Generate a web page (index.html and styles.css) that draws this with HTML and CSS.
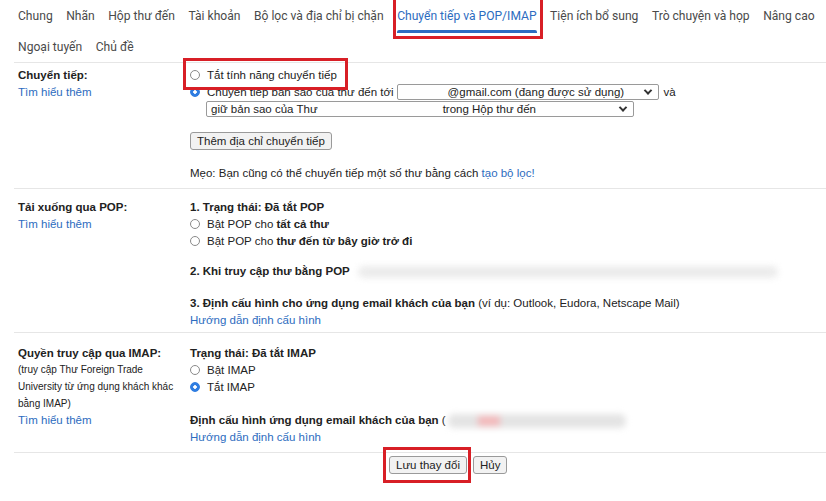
FILE: index.html
```html
<!DOCTYPE html>
<html lang="vi">
<head>
    <meta charset="UTF-8">
    <title>Cài đặt - Chuyển tiếp và POP/IMAP</title>
    <link rel="stylesheet" href="styles.css">
</head>
<body>
    <div class="page">
        <!-- Tabs -->
        <nav class="tabs">
            <div class="tab-row">
                <a class="tab">Chung</a>
                <a class="tab">Nhãn</a>
                <a class="tab">Hộp thư đến</a>
                <a class="tab">Tài khoản</a>
                <a class="tab">Bộ lọc và địa chỉ bị chặn</a>
                <a class="tab active mark">Chuyển tiếp và POP/IMAP</a>
                <a class="tab">Tiện ích bổ sung</a>
                <a class="tab">Trò chuyện và họp</a>
                <a class="tab">Nâng cao</a>
            </div>
            <div class="tab-row">
                <a class="tab">Ngoại tuyến</a>
                <a class="tab">Chủ đề</a>
            </div>
        </nav>

        <!-- Forwarding -->
        <section class="setting first">
            <div class="label">
                <b>Chuyển tiếp:</b>
                <a class="link">Tìm hiểu thêm</a>
            </div>
            <div class="value">
                <div class="line"><span class="mark mark-radio"><span class="radio"></span>Tắt tính năng chuyển tiếp</span></div>
                <div class="line"><span class="radio checked"></span>Chuyển tiếp bản sao của thư đến tới<span class="select select-email"><span class="sel-text">@gmail.com (đang được sử dụng)</span><span class="chev"></span></span>và</div>
                <div class="line indent">
                    <span class="select select-keep"><span>giữ bản sao của Thư</span><span class="sel-text keep">trong Hộp thư đến</span><span class="chev"></span></span>
                </div>
                <div class="line spaced"><button class="btn">Thêm địa chỉ chuyển tiếp</button></div>
                <div class="line tip">Mẹo: Bạn cũng có thể chuyển tiếp một số thư bằng cách <a class="link">tạo bộ lọc!</a></div>
            </div>
        </section>

        <!-- POP -->
        <section class="setting pop">
            <div class="label">
                <b>Tải xuống qua POP:</b>
                <a class="link">Tìm hiểu thêm</a>
            </div>
            <div class="value">
                <div class="line"><b>1. Trạng thái: Đã tắt POP</b></div>
                <div class="line"><span class="radio"></span>Bật POP cho <b>tất cả thư</b></div>
                <div class="line"><span class="radio"></span>Bật POP cho <b>thư đến từ bây giờ trở đi</b></div>
                <div class="line gap"><b>2. Khi truy cập thư bằng POP</b><span class="blur blur-pop"></span></div>
                <div class="line gap-md"><b>3. Định cấu hình cho ứng dụng email khách của bạn</b> (ví dụ: Outlook, Eudora, Netscape Mail)</div>
                <div class="line"><a class="link">Hướng dẫn định cấu hình</a></div>
            </div>
        </section>

        <!-- IMAP -->
        <section class="setting imap">
            <div class="label">
                <b>Quyền truy cập qua IMAP:</b>
                <span class="small">(truy cập Thư Foreign Trade University từ ứng dụng khách khác bằng IMAP)</span>
                <a class="link">Tìm hiểu thêm</a>
            </div>
            <div class="value">
                <div class="line"><b>Trạng thái: Đã tắt IMAP</b></div>
                <div class="line"><span class="radio"></span>Bật IMAP</div>
                <div class="line"><span class="radio checked"></span>Tắt IMAP</div>
                <div class="line gap-lg"><b>Định cấu hình ứng dụng email khách của bạn</b> (<span class="blur blur-imap"><span class="blur-red"></span></span></div>
                <div class="line"><a class="link">Hướng dẫn định cấu hình</a></div>
            </div>
        </section>

        <!-- Actions -->
        <div class="actions">
            <span class="mark mark-save"><button class="btn">Lưu thay đổi</button></span>
            <button class="btn">Hủy</button>
        </div>
    </div>
</body>
</html>
```

FILE: styles.css
```css
/* General */
body {
    margin: 0;
    background: #fff;
    color: #222;
    font-family: "Liberation Sans", Arial, sans-serif;
    font-size: 11.5px;
}

.page {
    width: 826px;
    height: 501px;
    overflow: hidden;
}

.link {
    color: #2d6cc0;
    cursor: pointer;
}

/* Tabs */
.tabs {
    padding: 0 0 0 18px;
    font-family: Roboto, "Open Sans", Arial, sans-serif;
    font-size: 12.1px;
    color: #4a4a4a;
}

.tab-row {
    display: flex;
    gap: 13.5px;
    height: 32px;
    align-items: center;
}

.tab-row + .tab-row {
    height: 30px;
}

.tab {
    position: relative;
    white-space: nowrap;
}

.tab.active {
    color: #2d6cc0;
}

.tab.active::after {
    content: "";
    position: absolute;
    left: 0;
    right: 0;
    bottom: -10px;
    height: 3px;
    background: #2d6cc0;
    border-radius: 2px 2px 0 0;
}

/* Red highlight boxes */
.mark {
    position: relative;
}

.mark::before {
    content: "";
    position: absolute;
    border: 3px solid #d81f26;
    pointer-events: none;
}

.tab.mark::before {
    left: -4px;
    right: -6px;
    top: -14px;
    bottom: -16px;
}

.mark-radio {
    display: inline-block;
}

.mark-radio::before {
    left: -7px;
    right: -11px;
    top: -9px;
    bottom: -6px;
}

.mark-save {
    display: inline-block;
}

.mark-save::before {
    left: -6px;
    right: -4px;
    top: -9px;
    bottom: -9px;
}

/* Setting sections */
.setting {
    display: grid;
    grid-template-columns: 172px 1fr;
    margin-left: 14px;
    border-top: 1px solid #e6e6e6;
}

.setting.first {
    padding: 4px 0 6px;
}

.setting.pop {
    padding: 10px 0 3px;
}

.setting.imap {
    padding: 12px 0 6px;
}

.label {
    display: flex;
    flex-direction: column;
    padding-left: 4px;
    line-height: 16.5px;
}

.label .small {
    font-size: 10px;
    width: 166px;
    line-height: 17px;
}

.value {
    padding-left: 4px;
}

.line {
    line-height: 16.8px;
    white-space: nowrap;
}

.indent {
    padding-left: 16px;
}

.spaced {
    margin-top: 15px;
}

.tip {
    margin-top: 15px;
}

.gap {
    margin-top: 13px;
}

.gap-md {
    margin-top: 16px;
}

.gap-lg {
    margin-top: 17px;
}

/* Radios */
.radio {
    display: inline-block;
    vertical-align: -1px;
    width: 8px;
    height: 8px;
    border: 1px solid #8a8a8a;
    border-radius: 50%;
    margin-right: 7px;
    background: #fff;
}

.radio.checked {
    border-color: #2f7de1;
    background: radial-gradient(circle, #fff 0 1.5px, #2f7de1 2px);
}

/* Selects */
.select {
    display: inline-flex;
    align-items: center;
    vertical-align: middle;
    height: 14px;
    line-height: 14px;
    border: 1px solid #9a9a9a;
    border-radius: 2px;
    margin: -1px 5px 0 3px;
    padding: 0 4px;
}

.select-email {
    width: 252px;
}

.select-email .sel-text {
    margin-left: 46px;
}

.select-keep {
    width: 418px;
    margin-left: 0;
}

.select-keep .keep {
    margin-left: 125px;
}

.chev {
    margin-left: auto;
    width: 4px;
    height: 4px;
    border-right: 2px solid #333;
    border-bottom: 2px solid #333;
    transform: rotate(45deg) translate(-1px, -1px);
    margin-right: 3px;
}

/* Buttons */
.btn {
    font-family: "Liberation Sans", Arial, sans-serif;
    font-size: 11.5px;
    color: #222;
    background: #f2f2f2;
    border: 1px solid #9a9a9a;
    border-radius: 3px;
    padding: 1px 6px;
    height: 18px;
    line-height: 14px;
    vertical-align: middle;
}

/* Blurred private data */
.blur {
    display: inline-block;
    vertical-align: middle;
    height: 12px;
    background: #e4e4e4;
    border-radius: 6px;
    filter: blur(3px);
    position: relative;
}

.blur-pop {
    width: 420px;
    margin-left: 8px;
    opacity: 0.7;
}

.blur-imap {
    width: 178px;
    height: 14px;
    margin-left: 2px;
}

.blur-red {
    position: absolute;
    left: 30px;
    top: 2px;
    width: 22px;
    height: 10px;
    background: #f3b9bb;
}

/* Actions */
.actions {
    display: flex;
    gap: 6px;
    margin-left: 14px;
    border-top: 1px solid #e6e6e6;
    padding: 3px 0 0 375px;
}
```
